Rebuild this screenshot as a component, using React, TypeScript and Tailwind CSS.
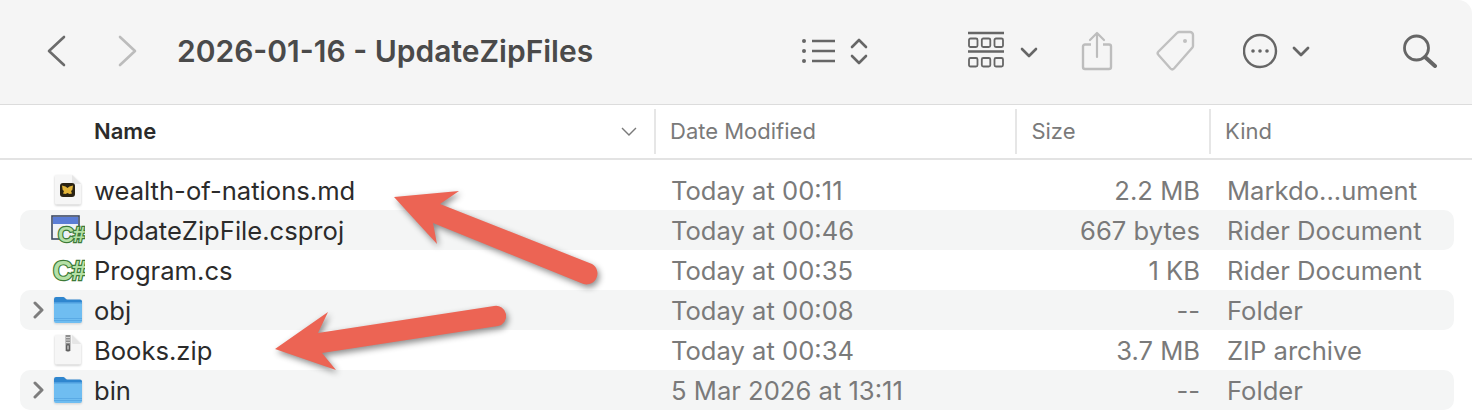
import React from 'react';

const FONT = 'font-["Inter","Noto_Sans",sans-serif]';

type RowData = {
  name: string;
  date: string;
  size: string;
  kind: string;
  icon: 'md' | 'csproj' | 'cs' | 'folder' | 'zip';
};

const rows: RowData[] = [
  { name: 'wealth-of-nations.md', date: 'Today at 00:11', size: '2.2 MB', kind: 'Markdo...ument', icon: 'md' },
  { name: 'UpdateZipFile.csproj', date: 'Today at 00:46', size: '667 bytes', kind: 'Rider Document', icon: 'csproj' },
  { name: 'Program.cs', date: 'Today at 00:35', size: '1 KB', kind: 'Rider Document', icon: 'cs' },
  { name: 'obj', date: 'Today at 00:08', size: '--', kind: 'Folder', icon: 'folder' },
  { name: 'Books.zip', date: 'Today at 00:34', size: '3.7 MB', kind: 'ZIP archive', icon: 'zip' },
  { name: 'bin', date: '5 Mar 2026 at 13:11', size: '--', kind: 'Folder', icon: 'folder' },
];

const PageIcon: React.FC<{ children?: React.ReactNode }> = ({ children }) => (
  <svg width="28" height="32" viewBox="0 0 28 32" className="drop-shadow-[0_1px_1px_rgba(0,0,0,0.22)]">
    <path d="M2 1h16l9 9v19a1.500 1.500 0 0 1-1.500 1.500h-23A1.500 1.500 0 0 1 1 29V2a1 1 0 0 1 1-1z" fill="#f6f6f6" />
    <path d="M18 1v7.500A1.500 1.500 0 0 0 19.500 10H27z" fill="#e6e6e6" />
    {children}
  </svg>
);

// the C# glyphs on the Rider file icons
const CSharpBadge: React.FC<{ size: number; x: number; y: number }> = ({ size, x, y }) => (
  <text
    x={x}
    y={y}
    fontSize={size}
    fontFamily="Liberation Sans, sans-serif"
    fontWeight="700"
    letterSpacing="-1"
    fill="#b5e0a6"
    stroke="#3c7a38"
    strokeWidth="2.400"
    paintOrder="stroke"
  >
    C#
  </text>
);

const FileIcon: React.FC<{ type: RowData['icon'] }> = ({ type }) => {
  if (type === 'md') {
    return (
      <PageIcon>
        <rect x="6" y="9" width="15" height="14" rx="3" fill="#2a2313" />
        <path d="M8 11.500l3.500 1 2 1.500 2-1.500 3.500-1-.7 4.500-1.300 1 1 2.500-2.500.5-2-1-2 1-2.500-.5 1-2.500-1.300-1z" fill="#e3b53a" />
      </PageIcon>
    );
  }
  if (type === 'zip') {
    return (
      <PageIcon>
        <rect x="11.500" y="1" width="5" height="16" fill="#8f8f8f" />
        <path d="M12 3.500h4M12 6h4M12 8.500h4" stroke="#dcdcdc" strokeWidth="0.900" />
        <rect x="12" y="10" width="4" height="7.500" rx="1.500" fill="#5f5f5f" />
        <rect x="13.300" y="11.500" width="1.400" height="4" fill="#c8c8c8" />
      </PageIcon>
    );
  }
  if (type === 'folder') {
    return (
      <svg width="30" height="28" viewBox="0 0 30 28" className="drop-shadow-[0_1px_1px_rgba(0,0,0,0.15)]">
        <path d="M1 8V3a2 2 0 0 1 2-2h7.500c1.500 0 2 2.500 3.500 2.500h13a2 2 0 0 1 2 2V9z" fill="#2f86cf" />
        <rect x="1" y="6" width="28" height="21" rx="2" fill="#6fbdf1" />
        <rect x="1" y="6" width="28" height="1.500" fill="#4f9fdf" />
        <path d="M1 22.500h28M1 24.500h28" stroke="#55a5e2" strokeWidth="0.800" />
      </svg>
    );
  }
  if (type === 'csproj') {
    return (
      <svg width="34" height="30" viewBox="0 0 34 30">
        <rect x="1" y="1" width="27" height="23" fill="#eef1f8" stroke="#3e4a63" strokeWidth="1.600" />
        <rect x="2" y="2" width="25" height="7" fill="#5b7dd6" />
        <CSharpBadge size={22} x={7} y={27} />
      </svg>
    );
  }
  return (
    <svg width="34" height="26" viewBox="0 0 34 26">
      <CSharpBadge size={27} x={2} y={23} />
    </svg>
  );
};

const Row: React.FC<{ row: RowData; striped: boolean }> = ({ row, striped }) => (
  <div className={`flex h-10 items-center rounded-[10px] text-[25.6px] leading-none ${striped ? 'bg-[#f4f5f5]' : ''}`}>
    <div className="flex w-[31px] shrink-0 pl-[13px]">
      {row.icon === 'folder' && (
        <svg width="11" height="18" viewBox="0 0 11 18" fill="none" stroke="#7d7d7d" strokeWidth="3" strokeLinecap="round" strokeLinejoin="round">
          <path d="M2 2l7 7-7 7" />
        </svg>
      )}
    </div>
    <div className="flex w-[34px] shrink-0 justify-center">
      <FileIcon type={row.icon} />
    </div>
    <div className="ml-[9px] w-[577px] shrink-0 pt-[2px] text-[#2b2b2b]">{row.name}</div>
    <div className="w-[300px] shrink-0 pt-[2px] text-[#7a7a7a]">{row.date}</div>
    <div className="w-[229px] shrink-0 pt-[2px] text-right text-[#7a7a7a]">{row.size}</div>
    <div className="ml-[27px] pt-[2px] text-[#7a7a7a]">{row.kind}</div>
  </div>
);

const Toolbar: React.FC = () => (
  <div className="flex h-[105px] items-center rounded-tr-[14px] border-b-[1.5px] border-[#dcdcdc] bg-[#f5f5f5] pb-[2px] pl-[46px]">
    <svg width="20" height="32" viewBox="0 0 20 32" fill="none" stroke="#6b6b6b" strokeWidth="2.600" strokeLinecap="round" strokeLinejoin="round">
      <path d="M18 2L3 16l15 14" />
    </svg>
    <svg width="20" height="32" viewBox="0 0 20 32" fill="none" stroke="#bcbcbc" strokeWidth="2.600" strokeLinecap="round" strokeLinejoin="round" className="ml-[52px]">
      <path d="M2 2l15 14L2 30" />
    </svg>
    <div className="ml-[39px] w-[623px] text-[30px] font-semibold text-[#4a4a4a]">2026-01-16 - UpdateZipFiles</div>
    {/* list view + sort arrows */}
    <svg width="70" height="34" viewBox="0 0 70 34" fill="none" stroke="#666">
      <circle cx="4" cy="7" r="2" fill="#666" stroke="none" />
      <circle cx="4" cy="17" r="2" fill="#666" stroke="none" />
      <circle cx="4" cy="27" r="2" fill="#666" stroke="none" />
      <path d="M12 7h23M12 17h23M12 27h23" strokeWidth="2.400" />
      <path d="M52 13l7-7 7 7M52 22l7 7 7-7" strokeWidth="2.600" strokeLinecap="round" strokeLinejoin="round" />
    </svg>
    <svg width="70" height="40" viewBox="0 0 70 40" fill="none" stroke="#666" className="ml-[98px]">
      <path d="M0 2h36M0 20.500h36" strokeWidth="2.400" />
      <rect x="1" y="7.500" width="8.500" height="8.500" rx="1.500" strokeWidth="1.800" />
      <rect x="13.800" y="7.500" width="8.500" height="8.500" rx="1.500" strokeWidth="1.800" />
      <rect x="26.500" y="7.500" width="8.500" height="8.500" rx="1.500" strokeWidth="1.800" />
      <rect x="1" y="27" width="8.500" height="8.500" rx="1.500" strokeWidth="1.800" />
      <rect x="13.800" y="27" width="8.500" height="8.500" rx="1.500" strokeWidth="1.800" />
      <rect x="26.500" y="27" width="8.500" height="8.500" rx="1.500" strokeWidth="1.800" />
      <path d="M54 18l7 7 7-7" strokeWidth="2.600" strokeLinecap="round" strokeLinejoin="round" />
    </svg>
    {/* share */}
    <svg width="32" height="40" viewBox="0 0 32 40" fill="none" stroke="#bdbdbd" className="ml-[43px]">
      <path d="M10 13.500H4a2 2 0 0 0-2 2V36a2 2 0 0 0 2 2h24a2 2 0 0 0 2-2V15.500a2 2 0 0 0-2-2h-6" strokeWidth="2.400" />
      <path d="M16 26V2M9 9l7-7 7 7" strokeWidth="2.200" strokeLinecap="round" strokeLinejoin="round" />
    </svg>
    {/* tag */}
    <svg width="40" height="42" viewBox="0 0 40 42" fill="none" stroke="#c0c0c0" className="ml-[43px]">
      <path d="M2.500 21.500L21 3a3 3 0 0 1 2-1h11a3 3 0 0 1 3 3v11a3 3 0 0 1-1 2L18 38.500a2.500 2.500 0 0 1-3.500 0l-12-13.500a2.500 2.500 0 0 1 0-3.500z" strokeWidth="2.400" strokeLinejoin="round" />
      <circle cx="29" cy="11" r="2" fill="#c0c0c0" stroke="none" />
    </svg>
    {/* more */}
    <svg width="67" height="36" viewBox="0 0 67 36" fill="none" stroke="#666" className="ml-[47px]">
      <circle cx="17" cy="18" r="16" strokeWidth="2.400" />
      <circle cx="10" cy="18" r="1.800" fill="#666" stroke="none" />
      <circle cx="17" cy="18" r="1.800" fill="#666" stroke="none" />
      <circle cx="24" cy="18" r="1.800" fill="#666" stroke="none" />
      <path d="M51 15l7 7 7-7" strokeWidth="2.800" strokeLinecap="round" strokeLinejoin="round" />
    </svg>
    <svg width="36" height="34" viewBox="0 0 36 34" fill="none" stroke="#666" className="ml-[92px]">
      <circle cx="14.500" cy="14" r="12" strokeWidth="2.800" />
      <path d="M23 23l10 9" strokeWidth="4" strokeLinecap="round" />
    </svg>
  </div>
);

const ColumnHeader: React.FC = () => (
  <div className="flex h-[55px] items-center border-b-[2px] border-[#e3e3e3] text-[22px] text-[#7a7a7a]">
    <div className="ml-[94px] w-[528px] font-semibold text-[#2b2b2b]">Name</div>
    <svg width="16" height="9" viewBox="0 0 16 9" fill="none" stroke="#7a7a7a" strokeWidth="1.400">
      <path d="M1 1l7 7 7-7" />
    </svg>
    <div className="ml-[17px] w-[362px] border-l-[2px] border-[#e6e6e6] py-[6px] pl-[14px]">Date Modified</div>
    <div className="w-[194px] border-l-[2px] border-[#e6e6e6] py-[6px] pl-[14px]">Size</div>
    <div className="border-l-[2px] border-[#e6e6e6] py-[6px] pl-[14px] pr-[200px]">Kind</div>
  </div>
);

const Arrows: React.FC = () => (
  <svg width="1472" height="420" viewBox="0 0 1472 420" className="pointer-events-none absolute left-0 top-0 drop-shadow-[2px_3px_3px_rgba(0,0,0,0.45)]">
    <path d="M394 197L459 191L440 204L592 264A10 10 0 0 1 581 283L433 223L437 244Z" fill="#ec6454" />
    <path d="M275 349L328 312L318 333L494 306A10 10 0 0 1 498 326L322 353L336 370Z" fill="#ec6454" />
  </svg>
);

const App: React.FC = () => (
  <div className={`relative h-[420px] w-[1472px] overflow-hidden bg-white ${FONT}`}>
    <Toolbar />
    <ColumnHeader />
    <div className="flex flex-col pl-[20px] pr-[18px] pt-[10px]">
      {rows.map((row, i) => (
        <Row key={row.name} row={row} striped={i % 2 === 1} />
      ))}
    </div>
    <Arrows />
  </div>
);

export default App;
